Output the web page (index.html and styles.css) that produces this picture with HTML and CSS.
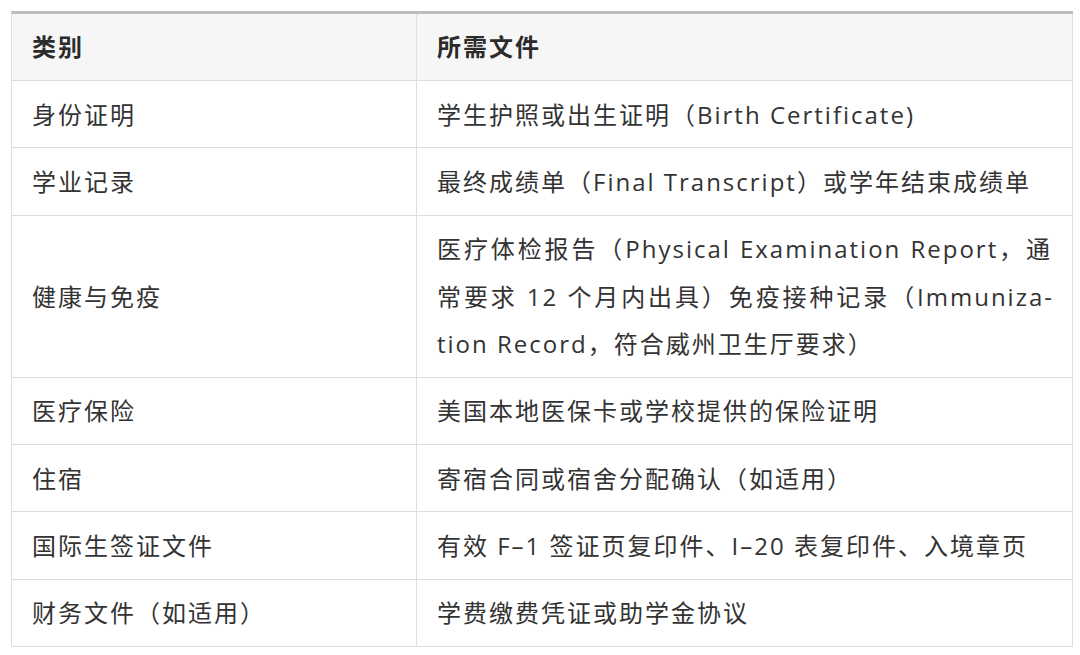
FILE: index.html
```html
<!DOCTYPE html>
<html lang="zh-CN">
<head>
<meta charset="utf-8">
<title>所需文件</title>
<link rel="stylesheet" href="styles.css">
</head>
<body>
<div class="page">
  <table class="docs">
    <thead>
      <tr>
        <th class="cat">类别</th>
        <th>所需文件</th>
      </tr>
    </thead>
    <tbody>
      <tr>
        <td class="cat">身份证明</td>
        <td>学生护照或出生证明（Birth Certificate)</td>
      </tr>
      <tr>
        <td class="cat">学业记录</td>
        <td>最终成绩单（Final Transcript）或学年结束成绩单</td>
      </tr>
      <tr>
        <td class="cat">健康与免疫</td>
        <td>医疗体检报告（Physical Examination Report，通常要求 12 个月内出具）免疫接种记录（Immuniza&shy;tion Record，符合威州卫生厅要求）</td>
      </tr>
      <tr>
        <td class="cat">医疗保险</td>
        <td>美国本地医保卡或学校提供的保险证明</td>
      </tr>
      <tr>
        <td class="cat">住宿</td>
        <td>寄宿合同或宿舍分配确认（如适用）</td>
      </tr>
      <tr>
        <td class="cat">国际生签证文件</td>
        <td>有效 F–1 签证页复印件、I–20 表复印件、入境章页</td>
      </tr>
      <tr>
        <td class="cat">财务文件（如适用）</td>
        <td>学费缴费凭证或助学金协议</td>
      </tr>
    </tbody>
  </table>
</div>
</body>
</html>
```
FILE: styles.css
```css
html, body {
  margin: 0;
  padding: 0;
  background: #ffffff;
}

.page {
  padding: 11px 0 0 11px;
}

.docs {
  width: 1062px;
  table-layout: fixed;
  border-collapse: separate;
  border-spacing: 0;
  border-top: 3px solid #bdbdbd;
  border-left: 1px solid #dedede;
  font-family: "Open Sans", "Noto Sans CJK SC", sans-serif;
  font-size: 24px;
  letter-spacing: 2px;
  color: #333333;
}

.docs th,
.docs td {
  box-sizing: border-box;
  text-align: justify;
  vertical-align: middle;
  padding: 9.575px 20px;
  line-height: 47.25px;
  border-right: 1px solid #dedede;
  border-bottom: 1px solid #dedede;
}

.docs th {
  padding-top: 9.375px;
  padding-bottom: 9.375px;
  background: #f6f6f6;
  font-weight: bold;
  color: #2b2b2b;
  text-align: left;
}

.docs .cat {
  width: 405px;
}
```
